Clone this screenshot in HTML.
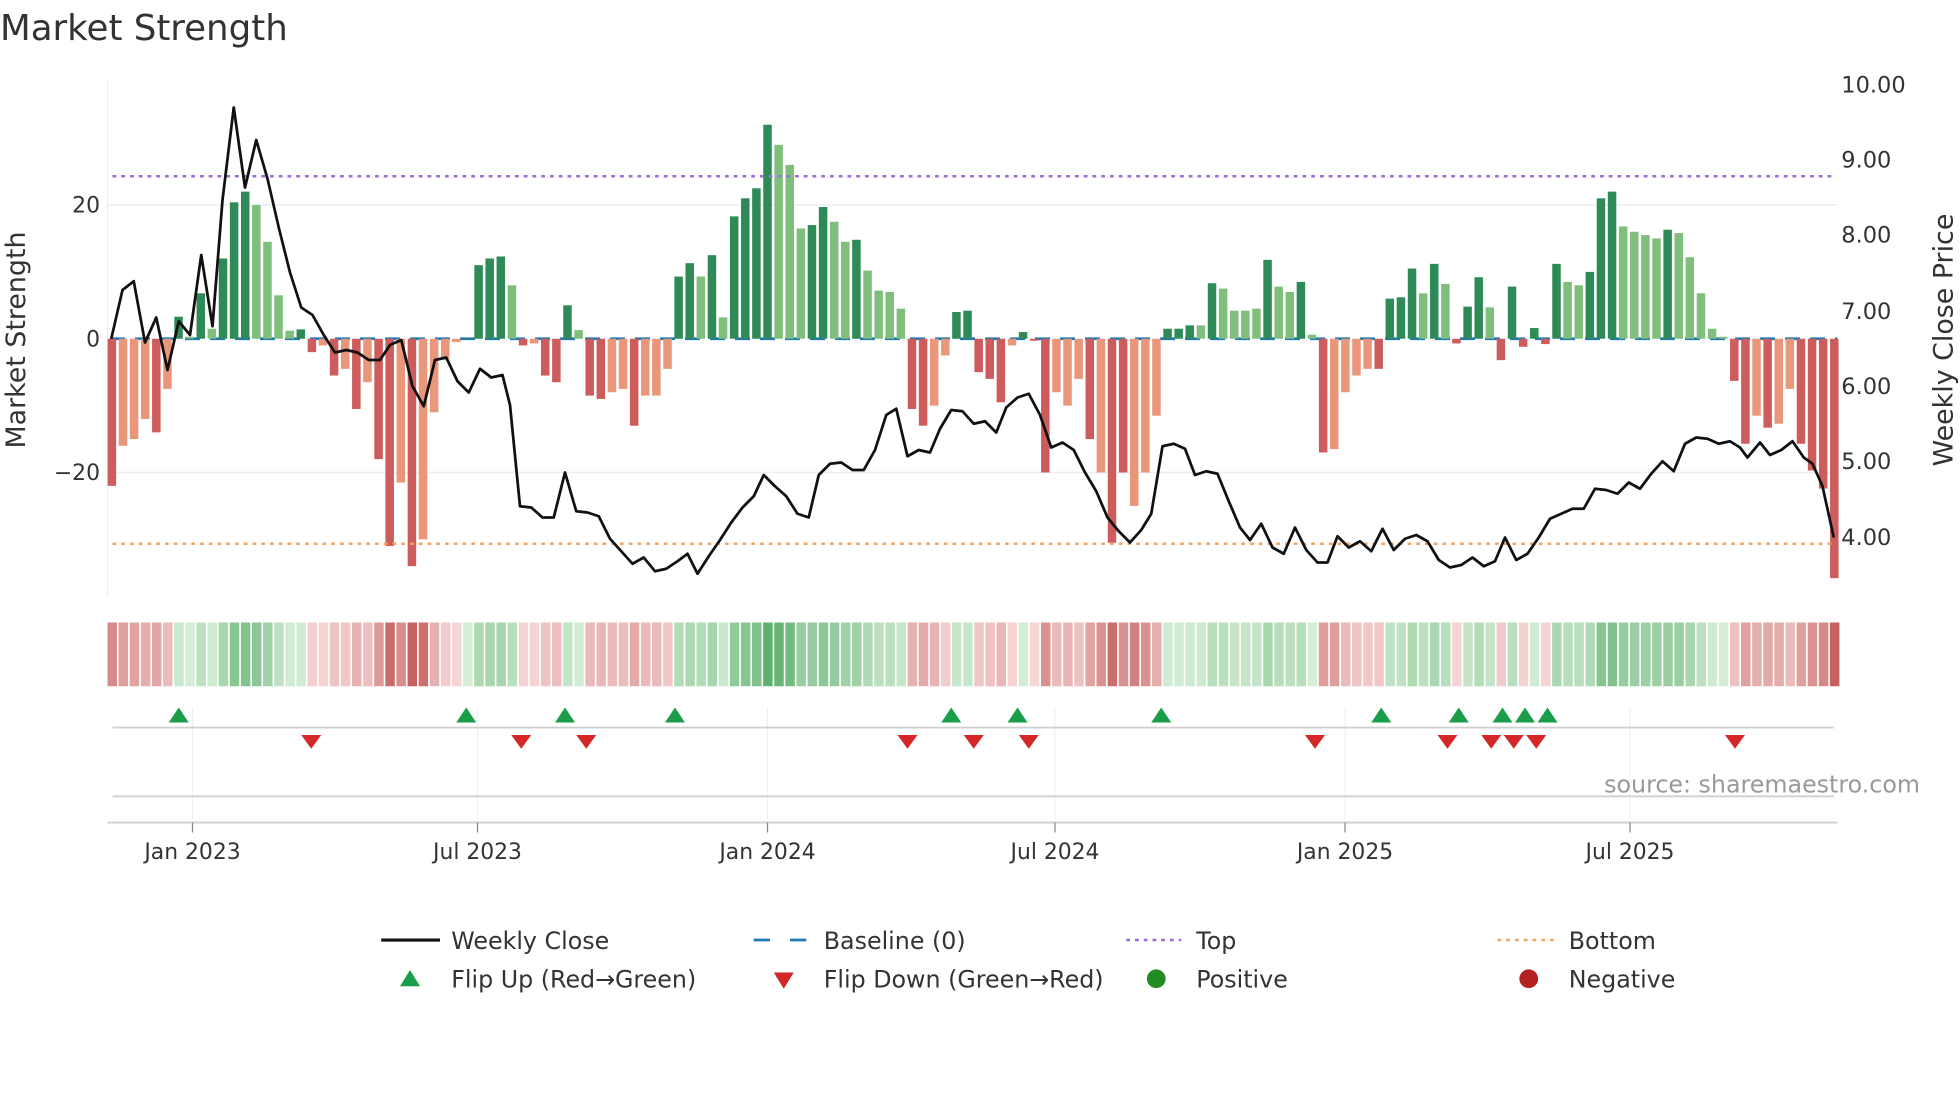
<!DOCTYPE html>
<html><head><meta charset="utf-8">
<style>
html,body{margin:0;padding:0;background:#fff;}
svg{display:block;}
text{font-family:"DejaVu Sans","Liberation Sans",sans-serif;fill:#333;}
</style></head>
<body>
<svg id="s" width="1960" height="1102" viewBox="0 0 1568 881.6" xmlns="http://www.w3.org/2000/svg">
<rect width="1568" height="882" fill="#fff"/>
<text x="0" y="32" font-size="28.5">Market Strength</text>
<line x1="86" y1="64" x2="86" y2="478" stroke="#eceef2" stroke-width="1"/>
<line x1="86" y1="164" x2="1470" y2="164" stroke="#eceef2" stroke-width="1.2"/>
<line x1="86" y1="378" x2="1470" y2="378" stroke="#eceef2" stroke-width="1.2"/>
<text x="80" y="170" font-size="17.5" text-anchor="end">20</text>
<text x="80" y="277" font-size="17.5" text-anchor="end">0</text>
<text x="80" y="384" font-size="17.5" text-anchor="end">−20</text>
<text transform="translate(20,272) rotate(-90)" font-size="21.5" text-anchor="middle">Market Strength</text>
<text transform="translate(1562,272) rotate(-90)" font-size="21.5" text-anchor="middle">Weekly Close Price</text>
<g font-size="18">
<text x="1473" y="74">10.00</text>
<text x="1473" y="134">9.00</text>
<text x="1473" y="194">8.00</text>
<text x="1473" y="255">7.00</text>
<text x="1473" y="315">6.00</text>
<text x="1473" y="375">5.00</text>
<text x="1473" y="436">4.00</text>
</g>
<line x1="88" y1="271" x2="1470" y2="271" stroke="#1f77b4" stroke-width="2.2" stroke-dasharray="12 8"/>
<g id="bars"></g>
<line x1="90" y1="141" x2="1468" y2="141" stroke="#9b6bdc" stroke-width="2" stroke-dasharray="3 4"/>
<line x1="90" y1="435" x2="1468" y2="435" stroke="#f4a460" stroke-width="2" stroke-dasharray="3 4"/>
<polyline id="price" fill="none" stroke="#111" stroke-width="2.2" stroke-linejoin="round"/>
<g id="strip"></g>
<g stroke="#eef0f5" stroke-width="1">
<line x1="154" y1="566" x2="154" y2="655"/><line x1="382" y1="566" x2="382" y2="655"/>
<line x1="614" y1="566" x2="614" y2="655"/><line x1="844" y1="566" x2="844" y2="655"/>
<line x1="1076" y1="566" x2="1076" y2="655"/><line x1="1304" y1="566" x2="1304" y2="655"/>
</g>
<line x1="90" y1="582" x2="1467" y2="582" stroke="#d0d0d0" stroke-width="1.5"/>
<line x1="90" y1="637" x2="1467" y2="637" stroke="#d0d0d0" stroke-width="1.5"/>
<line x1="86" y1="658" x2="1470" y2="658" stroke="#cfcfcf" stroke-width="1.5"/>
<g id="marks"></g>
<g stroke="#888" stroke-width="1">
<line x1="154" y1="658" x2="154" y2="666"/><line x1="382" y1="658" x2="382" y2="666"/>
<line x1="614" y1="658" x2="614" y2="666"/><line x1="844" y1="658" x2="844" y2="666"/>
<line x1="1076" y1="658" x2="1076" y2="666"/><line x1="1304" y1="658" x2="1304" y2="666"/>
</g>
<g font-size="17.5" text-anchor="middle">
<text x="154" y="687">Jan 2023</text><text x="382" y="687">Jul 2023</text>
<text x="614" y="687">Jan 2024</text><text x="844" y="687">Jul 2024</text>
<text x="1076" y="687">Jan 2025</text><text x="1304" y="687">Jul 2025</text>
</g>
<text x="1536" y="634" font-size="19" text-anchor="end" style="fill:#999">source: sharemaestro.com</text>
<g font-size="19">
<line x1="305" y1="752" x2="352" y2="752" stroke="#111" stroke-width="2.5"/>
<text x="361" y="759">Weekly Close</text>
<line x1="603" y1="752" x2="616" y2="752" stroke="#1f77b4" stroke-width="2.2"/>
<line x1="632" y1="752" x2="645" y2="752" stroke="#1f77b4" stroke-width="2.2"/>
<text x="659" y="759">Baseline (0)</text>
<line x1="901" y1="752" x2="945" y2="752" stroke="#9b6bdc" stroke-width="2" stroke-dasharray="3 4"/>
<text x="957" y="759">Top</text>
<line x1="1198" y1="752" x2="1243" y2="752" stroke="#f4a460" stroke-width="2" stroke-dasharray="3 4"/>
<text x="1255" y="759">Bottom</text>
<polygon points="320,789 336,789 328,776" fill="#1a9e4a"/>
<text x="361" y="790">Flip Up (Red→Green)</text>
<polygon points="619,778 635,778 627,791" fill="#d62728"/>
<text x="659" y="790">Flip Down (Green→Red)</text>
<circle cx="925" cy="783" r="7.5" fill="#228b22"/>
<text x="957" y="790">Positive</text>
<circle cx="1223" cy="783" r="7.5" fill="#b22222"/>
<text x="1255" y="790">Negative</text>
</g>
</svg>
<script>
var V=[[-22,1],[-16,0],[-15,0],[-12,0],[-14,1],[-7.5,0],[3.3,1],[0.3,0],[6.8,1],[1.5,0],[12,1],[20.4,1],[22,1],[20,0],[14.5,0],[6.5,0],[1.2,0],[1.4,1],[-2,1],[-1,0],[-5.5,1],[-4.5,0],[-10.5,1],[-6.5,0],[-18,1],[-31,1],[-21.5,0],[-34,1],[-30,0],[-11,0],[-3,0],[-0.5,0],[0.1,1],[11,1],[12,1],[12.3,1],[8,0],[-1,1],[-0.7,0],[-5.5,1],[-6.5,1],[5,1],[1.3,0],[-8.5,1],[-9,1],[-8,0],[-7.5,0],[-13,1],[-8.5,0],[-8.5,0],[-4.5,0],[9.3,1],[11.3,1],[9.3,0],[12.5,1],[3.2,0],[18.3,1],[21,1],[22.5,1],[32,1],[29,0],[26,0],[16.5,0],[17,1],[19.7,1],[17.5,0],[14.5,0],[14.8,1],[10.2,0],[7.2,0],[7,0],[4.5,0],[-10.5,1],[-13,1],[-10,0],[-2.5,0],[4,1],[4.2,1],[-5,1],
[-6,1],[-9.5,1],[-1,0],[1,1],[-0.3,1],[-20,1],[-8,0],[-10,0],[-6,0],[-15,1],[-20,0],[-30.5,1],[-20,1],[-25,0],[-20,0],[-11.5,0],
[1.5,1],[1.5,1],[2,1],[2,0],[8.3,1],[7.5,0],[4.2,0],[4.2,0],[4.5,0],[11.8,1],[7.8,0],[7,0],[8.5,1],[0.6,0],
[-17,1],[-16.5,0],[-8,0],[-5.5,0],[-4.5,0],[-4.5,1],
[6,1],[6.2,1],[10.5,1],[6.8,0],[11.2,1],[8.2,0],[-0.7,1],[4.8,1],[9.2,1],[4.7,0],[-3.2,1],[7.8,1],[-1.2,1],[1.6,1],[-0.8,1],[11.2,1],[8.5,0],[8,0],[10,1],[21,1],[22,1],[16.8,0],[16,0],[15.5,0],[15,0],[16.3,1],[15.8,0],[12.2,0],[6.8,0],[1.5,0],[0.3,0],
[-6.3,1],[-15.7,1],[-11.5,0],[-13.3,1],[-12.7,0],[-7.5,0],[-15.7,1],[-19.7,1],[-22.4,1],[-35.8,1]];
var NS="http://www.w3.org/2000/svg";
function el(t,a,p){var e=document.createElementNS(NS,t);for(var k in a)e.setAttribute(k,a[k]);p.appendChild(e);return e;}
var bars=document.getElementById('bars'),strip=document.getElementById('strip');
function mix(a,b,t){var r=[];for(var i=0;i<3;i++)r.push(Math.round(a[i]+(b[i]-a[i])*t));return 'rgb('+r.join(',')+')';}
var sp=8.89;
for(var i=0;i<V.length;i++){
 var v=V[i][0],d=V[i][1],cx=89.5+i*sp;
 var y0=271,y1=271-v*5.35;
 var col=v>=0?(d?'#2e8b57':'#7fbf7b'):(d?'#cd5c5c':'#e9967a');
 el('rect',{x:cx-3.4,y:Math.min(y0,y1),width:6.8,height:Math.max(Math.abs(y1-y0),0.6),fill:col},bars);
 var t=Math.min(Math.abs(v)/34,1);
 var c=v>=0?mix([214,238,216],[84,172,100],t):mix([246,214,214],[197,98,96],t);
 el('rect',{x:86+i*sp,y:498,width:sp-1.3,height:51,fill:c},strip);
}
var P=[[89,271],[98,232],[107,225],[116,274],[125,254],[134,296],[143,257],[152,268],[161,204],[170,261],[178,160],[187,86],[196,150],[205,112],[214,143],[223,182],[232,218],[241,246],[250,252],[259,268],[268,282],[277,280],[286,282],[295,288],[304,288],[312,276],[321,272],[330,309],[339,325],[348,288],[357,286],[366,305],[375,314],[384,295],[393,302],[402,300],[408,324],[416,405],[425,406],[434,414],[443,414],[452,378],[461,409],[470,410],[479,413],[488,431],[497,441],[506,451],[515,446],[524,457],[533,455],[542,449],[550,443],[558,459],[567,445],[576,432],[585,418],[594,406],[603,397],[611,380],[620,389],[629,397],[638,411],[647,414],[655,380],[664,371],[673,370],[682,376],[691,376],[700,360],[709,332],[717,327],[726,365],[735,360],[744,362],[752,343],[761,328],[770,329],[779,339],[788,337],[797,346],[805,326],[814,318],[823,315],[832,332],[841,358],[850,354],[859,360],[868,378],[877,393],[886,414],[895,425],[904,434],[913,424],[921,411],[930,357],[939,355],[948,359],[956,380],[965,377],[974,379],[983,401],[992,422],[1000,432],[1009,419],[1018,438],[1027,443],[1036,422],[1045,440],[1054,450],[1062,450],[1070,429],[1079,438],[1088,433],[1097,441],[1106,423],[1115,440],[1124,431],[1133,428],[1142,433],[1151,448],[1160,454],[1169,452],[1178,446],[1187,453],[1196,449],[1204,430],[1213,448],[1222,443],[1231,430],[1240,415],[1249,411],[1258,407],[1267,407],[1276,391],[1285,392],[1294,395],[1303,386],[1312,391],[1321,379],[1330,369],[1339,377],[1348,355],[1357,350],[1366,351],[1375,355],[1384,353],[1392,358],[1398,366],[1408,354],[1416,364],[1425,360],[1434,353],[1443,366],[1450,371],[1458,389],[1467,430]];
document.getElementById('price').setAttribute('points',P.map(function(p){return p.join(',')}).join(' '));
var marks=document.getElementById('marks');
[143,373,452,540,761,814,929,1105,1167,1202,1220,1238].forEach(function(x){el('polygon',{points:(x-8)+',578 '+(x+8)+',578 '+x+',566',fill:'#1a9e4a'},marks);});
[249,417,469,726,779,823,1052,1158,1193,1211,1229,1388].forEach(function(x){el('polygon',{points:(x-8)+',588 '+(x+8)+',588 '+x+',599',fill:'#d62728'},marks);});
</script>
</body></html>
